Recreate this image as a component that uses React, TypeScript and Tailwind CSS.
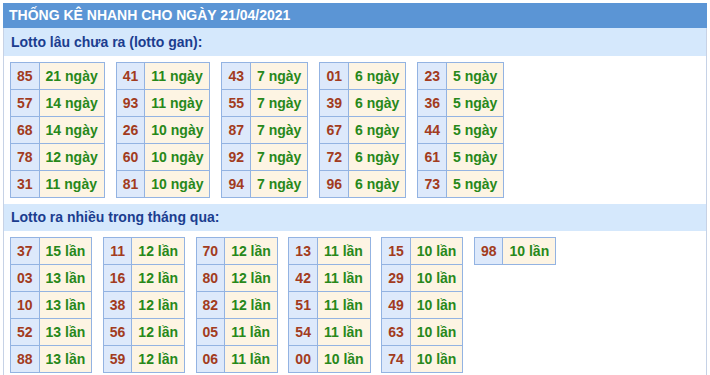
import React from "react";

type Pair = [string, string];

const gan: Pair[][] = [
  [["85", "21"], ["57", "14"], ["68", "14"], ["78", "12"], ["31", "11"]],
  [["41", "11"], ["93", "11"], ["26", "10"], ["60", "10"], ["81", "10"]],
  [["43", "7"], ["55", "7"], ["87", "7"], ["92", "7"], ["94", "7"]],
  [["01", "6"], ["39", "6"], ["67", "6"], ["72", "6"], ["96", "6"]],
  [["23", "5"], ["36", "5"], ["44", "5"], ["61", "5"], ["73", "5"]],
];

const nhieu: Pair[][] = [
  [["37", "15"], ["03", "13"], ["10", "13"], ["52", "13"], ["88", "13"]],
  [["11", "12"], ["16", "12"], ["38", "12"], ["56", "12"], ["59", "12"]],
  [["70", "12"], ["80", "12"], ["82", "12"], ["05", "11"], ["06", "11"]],
  [["13", "11"], ["42", "11"], ["51", "11"], ["54", "11"], ["00", "10"]],
  [["15", "10"], ["29", "10"], ["49", "10"], ["63", "10"], ["74", "10"]],
  [["98", "10"]],
];

const StatTable = ({ rows, unit }: { rows: Pair[]; unit: string }) => (
  <div className="grid grid-cols-[auto_auto] border-l border-t border-[#93b3e2]">
    {rows.map(([num, count]) => (
      <React.Fragment key={num}>
        <div className="h-[27px] px-[6px] flex items-center justify-center bg-[#dde9fb] text-[#a23b20] border-r border-b border-[#93b3e2]">
          {num}
        </div>
        <div className="h-[27px] px-[6px] flex items-center bg-[#fdf4e3] text-[#27881a] border-r border-b border-[#93b3e2]">
          {count} {unit}
        </div>
      </React.Fragment>
    ))}
  </div>
);

const SubTitle = ({ text, tall }: { text: string; tall?: boolean }) => (
  <div
    className={
      tall
        ? "h-[28px] pl-[7px] flex items-center bg-[#d5e8fc] text-[#1b3d8f]"
        : "h-[27px] pl-[7px] flex items-center bg-[#d5e8fc] text-[#1b3d8f]"
    }
  >
    {text}
  </div>
);

export default function App() {
  return (
    <div className="bg-white min-h-[375px] pt-[3px] pl-[3px] font-['Liberation_Sans',Arial,sans-serif] text-[14px] font-bold">
      <div className="w-[704px]">
        <div className="h-[25px] pl-[6px] flex items-center bg-[#5b95d5] text-white">
          THỐNG KÊ NHANH CHO NGÀY 21/04/2021
        </div>
        <div className="border-x border-[#c6d2e6]">
          <SubTitle text="Lotto lâu chưa ra (lotto gan):" tall />
          <div className="flex items-start gap-[11px] px-[6px] py-[6px]">
            {gan.map((rows, i) => (
              <StatTable key={i} rows={rows} unit="ngày" />
            ))}
          </div>
          <SubTitle text="Lotto ra nhiều trong tháng qua:" />
          <div className="flex items-start gap-[10.5px] px-[6px] py-[6px]">
            {nhieu.map((rows, i) => (
              <StatTable key={i} rows={rows} unit="lần" />
            ))}
          </div>
        </div>
      </div>
    </div>
  );
}
